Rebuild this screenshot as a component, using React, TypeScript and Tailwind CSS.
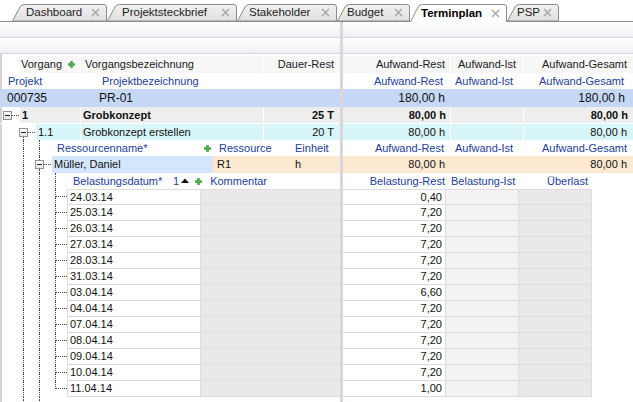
const dot = "border-dotted border-[#4a4a4a]";
const blue = "text-[#223d9b]";

const tabs = [
  { label: "Dashboard", w: "w-[95px]", pl: "pl-[14px]", width: 95 },
  { label: "Projektsteckbrief", w: "w-[130px]", pl: "pl-[15px]", width: 130 },
  { label: "Stakeholder", w: "w-[100px]", pl: "pl-[12px]", width: 100 },
  { label: "Budget", w: "w-[73px]", pl: "pl-[10px]", width: 73 },
  { label: "Terminplan", w: "w-[97px]", pl: "pl-[11px]", width: 97, active: true },
  { label: "PSP", w: "w-[52px]", pl: "pl-[10px]", width: 52 },
];

const dates = [
  ["24.03.14", "0,40"],
  ["25.03.14", "7,20"],
  ["26.03.14", "7,20"],
  ["27.03.14", "7,20"],
  ["28.03.14", "7,20"],
  ["31.03.14", "7,20"],
  ["03.04.14", "6,60"],
  ["04.04.14", "7,20"],
  ["07.04.14", "7,20"],
  ["08.04.14", "7,20"],
  ["09.04.14", "7,20"],
  ["10.04.14", "7,20"],
  ["11.04.14", "1,00"],
];

function Tab({ label, w, pl, width, active }: { label: string; w: string; pl: string; width: number; active?: boolean }) {
  const h = active ? 18 : 17;
  const d = `M0.5 ${h} L8 3 Q9.5 0.5 12.5 0.5 H${width - 3} Q${width - 0.5} 0.5 ${width - 0.5} 3 V${h}`;
  return (
    <div className={`relative shrink-0 flex items-center ${w} ${pl} ${active ? "h-[18px] -mb-px z-10 font-bold text-black" : "h-[17px] text-[#1c1c1c]"}`}>
      <svg className="absolute inset-0" width={width} height={h}>
        <defs>
          <linearGradient id={`g-${label}`} x1="0" y1="0" x2="0" y2="1">
            <stop offset="0" stopColor={active ? "#ffffff" : "#f1f1f1"} />
            <stop offset="1" stopColor={active ? "#ffffff" : "#e0e0e0"} />
          </linearGradient>
        </defs>
        <path d={d + (active ? "" : " Z")} fill={`url(#g-${label})`} stroke="#8c8c8c" strokeWidth="1" />
      </svg>
      <span className="relative text-[11.5px] pt-px">{label}</span>
      <svg className="relative ml-auto mr-[7px]" width="9" height="9" viewBox="0 0 9 9">
        <path d="M1 1 L8 8 M8 1 L1 8" stroke="#a3a3a3" strokeWidth="1.3" />
      </svg>
    </div>
  );
}

function Plus() {
  return (
    <svg width="7" height="7" viewBox="0 0 7 7" className="shrink-0">
      <path d="M2.5 0.3h2v2.2h2.2v2h-2.2v2.2h-2v-2.2h-2.2v-2h2.2z" fill="#49b04a" stroke="#2f8a30" strokeWidth="0.5" />
    </svg>
  );
}

function Band() {
  return <div className="h-[16px] shrink-0 border-b border-[#d6d6d6] bg-linear-to-b from-white to-[#efeff6]" />;
}

function Gap() {
  return <div className="w-[16px] shrink-0" />;
}

function TreeLine({ up = false, down = false, branch = false, w = "w-[16px]" }: { up?: boolean; down?: boolean; branch?: boolean; w?: string }) {
  return (
    <div className={`${w} shrink-0 self-stretch flex flex-col`}>
      <div className={`h-1/2 ml-[7px] ${dot} ${up ? "border-l" : ""} ${branch ? "border-b" : ""}`} />
      <div className={`flex-1 ml-[7px] ${dot} ${down ? "border-l" : ""}`} />
    </div>
  );
}

function Expander({ up = false, down = false }: { up?: boolean; down?: boolean }) {
  return (
    <div className="w-[20px] shrink-0 self-stretch flex flex-col">
      <div className={`flex-1 ml-[7px] ${dot} ${up ? "border-l" : ""}`} />
      <div className="h-[9px] flex items-center">
        <div className="ml-[3px] w-[9px] h-[9px] border border-[#919191] bg-linear-to-b from-white to-[#e4e4e4] flex items-center justify-center">
          <div className="w-[5px] h-px bg-[#1e1e1e]" />
        </div>
        <div className={`flex-1 mr-[1px] border-t ${dot}`} />
      </div>
      <div className={`flex-1 ml-[7px] ${dot} ${down ? "border-l" : ""}`} />
    </div>
  );
}

function LeftPane() {
  return (
    <div className="w-[340px] shrink-0 flex flex-col shadow-[inset_2px_0_0_#d5d1d5]">
      <Band />
      <Band />
      <div className="h-[2px] shrink-0" />
      <div className="h-[17px] shrink-0 flex text-[#1a1a1a]">
        <div className="w-[20px]" />
        <div className="w-[60px] bg-[#f7f7f7] flex items-center justify-end gap-[6px] pr-[5px]">
          <span>Vorgang</span>
          <Plus />
        </div>
        <div className="w-[183px] bg-[#f7f7f7] border-l border-white flex items-center pl-[4px]">Vorgangsbezeichnung</div>
        <div className="flex-1 bg-[#f7f7f7] border-l border-white flex items-center justify-end pr-[6px]">Dauer-Rest</div>
      </div>
      <div className={`h-[16px] shrink-0 flex items-center ${blue}`}>
        <div className="w-[102px] pl-[8px]">Projekt</div>
        <div>Projektbezeichnung</div>
      </div>
      <div className="h-[18px] shrink-0 flex items-center bg-[#c6d8f6] text-[12px] text-[#111]">
        <div className="w-[99px] pl-[7px]">000735</div>
        <div>PR-01</div>
      </div>
      <div className="h-[17px] shrink-0 flex border-b border-white font-bold text-[#111]">
        <Expander />
        <div className="w-[60px] bg-[#eeeeee] flex items-center pl-[2px]">1</div>
        <div className="w-[183px] bg-[#eeeeee] border-l border-white flex items-center pl-[2px]">Grobkonzept</div>
        <div className="flex-1 bg-[#eeeeee] border-l border-white flex items-center justify-end pr-[6px]">25 T</div>
      </div>
      <div className="h-[16px] shrink-0 flex text-[#111]">
        <Gap />
        <Expander down />
        <div className="w-[44px] bg-[#d8f5f9] flex items-center pl-[2px]">1.1</div>
        <div className="w-[183px] bg-[#d8f5f9] border-l border-white flex items-center pl-[2px]">Grobkonzept erstellen</div>
        <div className="flex-1 bg-[#d8f5f9] border-l border-white flex items-center justify-end pr-[6px]">20 T</div>
      </div>
      <div className={`h-[16px] shrink-0 flex ${blue}`}>
        <Gap />
        <TreeLine up down />
        <TreeLine up down />
        <div className="w-[156px] pl-[9px] flex items-center">Ressourcenname*</div>
        <div className="flex items-center">
          <Plus />
        </div>
        <div className="w-[84px] pl-[8px] flex items-center">Ressource</div>
        <div className="flex items-center">Einheit</div>
      </div>
      <div className="h-[17px] shrink-0 flex text-[#111]">
        <Gap />
        <TreeLine up down />
        <Expander up down />
        <div className="w-[161px] bg-[#d4e6fb] flex items-center pl-[2px]">Müller, Daniel</div>
        <div className="flex-1 bg-[#fde9d1] flex items-center">
          <div className="w-[82px] pl-[4px]">R1</div>
          <div>h</div>
        </div>
      </div>
      <div className={`h-[16px] shrink-0 flex ${blue}`}>
        <Gap />
        <TreeLine up down />
        <TreeLine up down />
        <TreeLine up down />
        <div className="w-[109px] pl-[9px] flex items-center">Belastungsdatum*</div>
        <div className="flex items-center">1</div>
        <svg width="8" height="5" viewBox="0 0 8 5" className="self-center ml-[2px] mb-px">
          <path d="M0 5 L4 0.5 L8 5 Z" fill="#111" />
        </svg>
        <div className="flex items-center ml-[6px]">
          <Plus />
        </div>
        <div className="flex items-center pl-[8px]">Kommentar</div>
      </div>
      <div className="flex flex-col text-[#111]">
        {dates.map(([d], i) => (
          <div key={d} className="h-[16px] shrink-0 flex">
            <Gap />
            <TreeLine up down />
            <TreeLine up down />
            <TreeLine up down={i < dates.length - 1} branch w="w-[19px]" />
            <div className={`w-[134px] bg-white border-l border-b border-r border-[#dcdcdc] flex items-center pl-[2px] ${i === 0 ? "border-t" : ""}`}>{d}</div>
            <div className={`flex-1 bg-[#ebe8ec] border-b border-[#e0dce0] ${i === 0 ? "border-t" : ""}`} />
          </div>
        ))}
      </div>
      <div className="h-[6px] shrink-0 flex">
        <Gap />
        <TreeLine up down />
        <TreeLine up down />
      </div>
    </div>
  );
}

function RightPane() {
  return (
    <div className="flex-1 flex flex-col">
      <Band />
      <Band />
      <div className="h-[2px] shrink-0" />
      <div className="h-[17px] shrink-0 flex text-[#1a1a1a]">
        <div className="w-[107px] bg-[#f7f7f7] flex items-center justify-end pr-[5px]">Aufwand-Rest</div>
        <div className="w-[73px] bg-[#f7f7f7] border-l border-white flex items-center justify-center">Aufwand-Ist</div>
        <div className="flex-1 bg-[#f7f7f7] border-l border-white flex items-center justify-end pr-[6px]">Aufwand-Gesamt</div>
      </div>
      <div className={`h-[16px] shrink-0 flex ${blue}`}>
        <div className="w-[107px] flex items-center justify-end pr-[7px]">Aufwand-Rest</div>
        <div className="w-[73px] flex items-center pl-[5px]">Aufwand-Ist</div>
        <div className="flex-1 flex items-center justify-end pr-[9px]">Aufwand-Gesamt</div>
      </div>
      <div className="h-[18px] shrink-0 flex bg-[#c6d8f6] text-[12px] text-[#111]">
        <div className="w-[107px] flex items-center justify-end pr-[5px]">180,00 h</div>
        <div className="w-[73px]" />
        <div className="flex-1 flex items-center justify-end pr-[8px]">180,00 h</div>
      </div>
      <div className="h-[17px] shrink-0 flex border-b border-white font-bold text-[#111]">
        <div className="w-[107px] bg-[#eeeeee] flex items-center justify-end pr-[4px]">80,00 h</div>
        <div className="w-[73px] bg-[#eeeeee] border-l border-white" />
        <div className="flex-1 bg-[#eeeeee] border-l border-white flex items-center justify-end pr-[5px]">80,00 h</div>
      </div>
      <div className="h-[16px] shrink-0 flex text-[#111]">
        <div className="w-[107px] bg-[#d8f5f9] flex items-center justify-end pr-[5px]">80,00 h</div>
        <div className="w-[73px] bg-[#d8f5f9] border-l border-white" />
        <div className="flex-1 bg-[#d8f5f9] border-l border-white flex items-center justify-end pr-[6px]">80,00 h</div>
      </div>
      <div className={`h-[16px] shrink-0 flex ${blue}`}>
        <div className="w-[107px] flex items-center justify-end pr-[6px]">Aufwand-Rest</div>
        <div className="w-[73px] flex items-center pl-[5px]">Aufwand-Ist</div>
        <div className="flex-1 flex items-center justify-end pr-[6px]">Aufwand-Gesamt</div>
      </div>
      <div className="h-[17px] shrink-0 flex bg-[#fde9d1] text-[#111]">
        <div className="w-[107px] flex items-center justify-end pr-[5px]">80,00 h</div>
        <div className="w-[73px]" />
        <div className="flex-1 flex items-center justify-end pr-[6px]">80,00 h</div>
      </div>
      <div className={`h-[16px] shrink-0 flex ${blue}`}>
        <div className="w-[103px] flex items-center justify-end pr-[1px]">Belastung-Rest</div>
        <div className="w-[73px] flex items-center pl-[5px]">Belastung-Ist</div>
        <div className="w-[73px] flex items-center pl-[28px]">Überlast</div>
      </div>
      <div className="flex flex-col text-[#111]">
        {dates.map(([d, v], i) => (
          <div key={d} className="h-[16px] shrink-0 flex">
            <div className={`w-[103px] bg-white border-b border-r border-[#dcdcdc] flex items-center justify-end pr-[3px] ${i === 0 ? "border-t" : ""}`}>{v}</div>
            <div className={`w-[73px] bg-[#f5f2f5] border-b border-r border-[#dedade] ${i === 0 ? "border-t" : ""}`} />
            <div className={`w-[73px] bg-[#ebe8ec] border-b border-r border-[#dedade] ${i === 0 ? "border-t" : ""}`} />
          </div>
        ))}
      </div>
    </div>
  );
}

export default function App() {
  return (
    <div className="w-[633px] h-[402px] overflow-hidden bg-white text-[11px] leading-none font-['Liberation_Sans',Arial,sans-serif] flex flex-col">
      <div className="h-[22px] shrink-0 flex items-end pl-[12px] border-b border-[#8c8c8c] bg-white">
        {tabs.map((t) => (
          <Tab key={t.label} {...t} />
        ))}
      </div>
      <div className="flex flex-1 min-h-0">
        <LeftPane />
        <div className="w-[3px] shrink-0 bg-[#dad6da]" />
        <RightPane />
      </div>
    </div>
  );
}
